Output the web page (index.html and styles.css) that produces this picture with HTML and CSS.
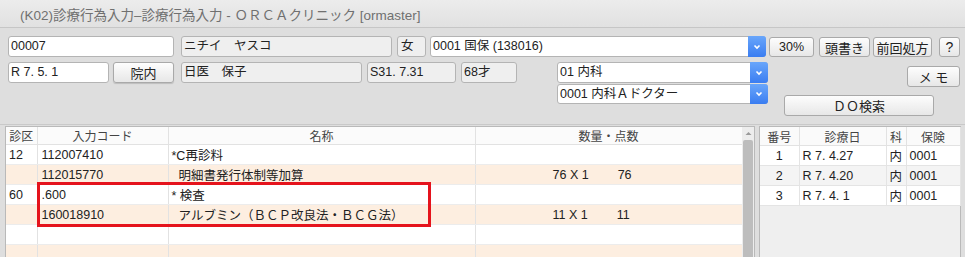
FILE: index.html
```html
<!DOCTYPE html>
<html lang="ja">

<head>
    <meta charset="UTF-8">
    <meta name="viewport" content="width=device-width, initial-scale=1.0">
    <title>診療行為入力</title>
    <link rel="stylesheet" href="styles.css">
</head>

<body>
    <div class="titlebar">
        <span class="title">(K02)診療行為入力–診療行為入力 - ＯＲＣＡクリニック [ormaster]</span>
    </div>

    <div class="form">
        <div class="row row-top">
            <div class="field w-id">00007</div>
            <div class="field ro w-kana">ニチイ　ヤスコ</div>
            <div class="field ro w-sex">女</div>
            <div class="combo w-hoken">
                <span class="combo-text">0001 国保 (138016)</span>
                <span class="combo-btn"><svg width="8" height="6" viewBox="0 0 8 6"><path d="M1.5 1.5 L4 4 L6.5 1.5" fill="none" stroke="#fff" stroke-width="1.6" /></svg></span>
            </div>
            <button class="btn w-rate">30%</button>
            <button class="btn btn-jp w-head">頭書き</button>
            <button class="btn btn-jp w-prev">前回処方</button>
            <button class="btn btn-jp w-help">?</button>
        </div>

        <div class="row row-lower">
            <div class="patient">
                <div class="field w-date">R 7. 5. 1</div>
                <button class="btn w-innai">院内</button>
                <div class="field ro w-name">日医　保子</div>
                <div class="field ro w-birth">S31. 7.31</div>
                <div class="field ro w-age">68才</div>
            </div>
            <div class="selects">
                <div class="combo">
                    <span class="combo-text">01 内科</span>
                    <span class="combo-btn"><svg width="8" height="6" viewBox="0 0 8 6"><path d="M1.5 1.5 L4 4 L6.5 1.5" fill="none" stroke="#fff" stroke-width="1.6" /></svg></span>
                </div>
                <div class="combo combo-small">
                    <span class="combo-text">0001 内科Ａドクター</span>
                    <span class="combo-btn"><svg width="8" height="6" viewBox="0 0 8 6"><path d="M1.5 1.5 L4 4 L6.5 1.5" fill="none" stroke="#fff" stroke-width="1.6" /></svg></span>
                </div>
            </div>
            <div class="actions">
                <button class="btn btn-jp btn-memo">メ モ</button>
                <button class="btn btn-jp btn-do">ＤＯ検索</button>
            </div>
        </div>
    </div>

    <div class="panes">
        <div class="pane pane-left">
            <div class="grid-wrap">
                <table class="grid">
                    <colgroup>
                        <col style="width:31px">
                        <col style="width:131px">
                        <col style="width:307px">
                        <col style="width:267px">
                    </colgroup>
                    <thead>
                        <tr>
                            <th>診区</th>
                            <th>入力コード</th>
                            <th>名称</th>
                            <th>数量・点数</th>
                        </tr>
                    </thead>
                    <tbody>
                        <tr>
                            <td>12</td>
                            <td class="code">112007410</td>
                            <td class="name">*C再診料</td>
                            <td></td>
                        </tr>
                        <tr class="odd">
                            <td></td>
                            <td class="code">112015770</td>
                            <td class="name sub">明細書発行体制等加算</td>
                            <td class="qty"><span class="amount">76 X 1</span><span class="points">76</span></td>
                        </tr>
                        <tr>
                            <td>60</td>
                            <td class="code">.600</td>
                            <td class="name">* 検査</td>
                            <td></td>
                        </tr>
                        <tr class="odd">
                            <td></td>
                            <td class="code">160018910</td>
                            <td class="name sub">アルブミン（ＢＣＰ改良法・ＢＣＧ法）</td>
                            <td class="qty"><span class="amount">11 X 1</span><span class="points">11</span></td>
                        </tr>
                        <tr>
                            <td></td>
                            <td></td>
                            <td></td>
                            <td></td>
                        </tr>
                        <tr class="odd">
                            <td></td>
                            <td></td>
                            <td></td>
                            <td></td>
                        </tr>
                    </tbody>
                </table>
            </div>
            <div class="scrollbar">
                <div class="scroll-up"><svg width="7" height="5" viewBox="0 0 7 5"><path d="M0.5 4 L3.5 1 L6.5 4 Z" fill="#9a9a9a" /></svg></div>
                <div class="scroll-thumb"></div>
            </div>
            <div class="highlight"></div>
        </div>

        <div class="pane pane-right">
            <table class="history">
                <colgroup>
                    <col style="width:39px">
                    <col style="width:87px">
                    <col style="width:20px">
                    <col style="width:54px">
                </colgroup>
                <thead>
                    <tr>
                        <th>番号</th>
                        <th>診療日</th>
                        <th>科</th>
                        <th>保険</th>
                    </tr>
                </thead>
                <tbody>
                    <tr>
                        <td class="num">1</td>
                        <td>R 7. 4.27</td>
                        <td>内</td>
                        <td>0001</td>
                    </tr>
                    <tr class="odd">
                        <td class="num">2</td>
                        <td>R 7. 4.20</td>
                        <td>内</td>
                        <td>0001</td>
                    </tr>
                    <tr>
                        <td class="num">3</td>
                        <td>R 7. 4. 1</td>
                        <td>内</td>
                        <td>0001</td>
                    </tr>
                </tbody>
            </table>
        </div>
    </div>
</body>

</html>
```

FILE: styles.css
```css
body {
    margin: 0;
    height: 257px;
    overflow: hidden;
    background-color: #dedede;
    font-family: "Liberation Sans", "Noto Sans CJK JP", sans-serif;
    font-size: 12.5px;
    color: #222;
}

.titlebar {
    height: 27px;
    border-bottom: 1px solid #c6c6c6;
    background: linear-gradient(#ececec, #e1e1e1);
    display: flex;
    align-items: center;
    padding-left: 20px;
}

.title {
    font-size: 13.5px;
    color: #707070;
}

.form {
    padding: 8px 0 0 8px;
}

.row {
    display: flex;
    align-items: flex-start;
}

.row-lower {
    margin-top: 5px;
    height: 54px;
}

.field {
    box-sizing: border-box;
    height: 21px;
    line-height: 19px;
    padding-left: 2px;
    border: 1px solid #b4b4b4;
    border-radius: 3px;
    background-color: #fff;
    white-space: nowrap;
    overflow: hidden;
}

.field.ro {
    background-color: #efefef;
}

.combo {
    box-sizing: border-box;
    height: 21px;
    display: flex;
    border: 1px solid #b4b4b4;
    border-radius: 3px;
    background-color: #fff;
}

.combo-small {
    height: 20px;
    margin-top: 1px;
}

.combo-text {
    flex: 1;
    padding-left: 2px;
    line-height: 19px;
    white-space: nowrap;
}

.combo-btn {
    width: 18px;
    margin: -1px -1px -1px 0;
    border-radius: 0 3px 3px 0;
    background: linear-gradient(#69a6fb, #3a7df1);
    display: flex;
    align-items: center;
    justify-content: center;
}

.btn {
    box-sizing: border-box;
    height: 20px;
    padding: 0;
    border: 1px solid #a9a9a9;
    border-radius: 3px;
    background: linear-gradient(#fdfdfd, #e7e7e7);
    font-family: inherit;
    font-size: 12.5px;
    color: #222;
    margin-top: 1px;
    white-space: nowrap;
}

.btn-jp {
    font-size: 13px;
}

/* first row */
.w-id { width: 166px; }
.w-kana { width: 211px; margin-left: 7px; }
.w-sex { width: 29px; margin-left: 5px; padding-left: 3px; }
.w-hoken { width: 336px; margin-left: 4px; }
.w-rate { width: 45px; margin-left: 3px; }
.w-head { width: 51px; margin-left: 5px; }
.w-prev { width: 59px; margin-left: 3px; }
.w-help { width: 21px; margin-left: 7px; font-size: 14px; }

/* second row */
.patient {
    display: flex;
    align-items: flex-start;
}

.w-date { width: 101px; }
.w-innai { width: 61px; height: 21px; margin: 0 0 0 4px; font-size: 13px; box-shadow: 0 1px 1px rgba(0, 0, 0, 0.15); }
.w-name { width: 181px; margin-left: 7px; }
.w-birth { width: 89px; margin-left: 5px; }
.w-age { width: 56px; margin-left: 5px; }

.selects {
    width: 211px;
    margin-left: 40px;
}

.actions {
    width: 176px;
    margin-left: 16px;
    display: flex;
    flex-direction: column;
    align-items: flex-start;
}

.btn-memo {
    width: 53px;
    height: 21px;
    margin: 4px 0 0 auto;
}

.btn-do {
    width: 150px;
    height: 21px;
    margin-top: 8px;
}

/* lower panes */
.panes {
    margin-top: 8px;
    border-top: 1px solid #c9c9c9;
    padding: 1px 0 0 5px;
    display: flex;
    gap: 4px;
}

.pane {
    box-sizing: border-box;
    height: 140px;
    border: 1px solid #b9b9b9;
}

.pane-left {
    position: relative;
    width: 750px;
    display: flex;
    background-color: #fff;
}

.grid-wrap {
    width: 736px;
}

.grid,
.history {
    border-collapse: collapse;
    table-layout: fixed;
    width: 100%;
}

.grid th,
.history th {
    height: 17px;
    padding: 0;
    font-weight: normal;
    font-size: 12px;
    color: #444;
    background-color: #fbfbfb;
    border-right: 1px solid #e2e2e2;
    border-bottom: 1px solid #e2e2e2;
}

.grid td {
    height: 18.75px;
    padding: 0 0 0 3px;
    border-right: 1px solid #e2e2e2;
    border-bottom: 1px solid #ececec;
    white-space: nowrap;
    overflow: hidden;
}

.grid td.code {
    padding-left: 4px;
}

.grid td.name {
    padding-left: 3px;
}

.grid td.sub {
    padding-left: 10px;
}

.grid tr.odd td {
    background-color: #fdeee0;
}

.grid td.qty {
    padding-left: 77px;
}

.points {
    margin-left: 29px;
}

.scrollbar {
    width: 12px;
    background-color: #ededed;
    display: flex;
    flex-direction: column;
}

.scroll-up {
    height: 12px;
    display: flex;
    align-items: center;
    justify-content: center;
}

.scroll-thumb {
    flex: 1;
    margin: 1px 1px 0 1px;
    background-color: #bdbdbd;
    border-radius: 2px 2px 0 0;
}

.highlight {
    position: absolute;
    left: 31px;
    top: 55px;
    width: 394px;
    height: 45px;
    box-sizing: border-box;
    border: 3px solid #e5131c;
}

.pane-right {
    width: 202px;
    background-color: #efefef;
}

.history th {
    height: 18px;
    background-color: #fafafa;
}

.history td {
    height: 16.5px;
    padding: 0 0 0 3px;
    background-color: #fff;
    border-right: 1px solid #e4e4e4;
    border-bottom: 1px solid #e4e4e4;
    white-space: nowrap;
}

.history td.num {
    text-align: center;
    padding-left: 0;
}

.history tr.odd td {
    background-color: #f4f4f4;
}
```
